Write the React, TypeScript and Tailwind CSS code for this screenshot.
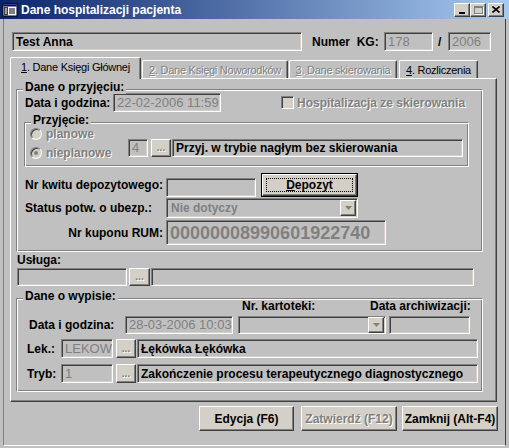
import React from 'react';

const dis = 'text-[#808080] [text-shadow:1px_1px_0_#ffffff]';
const sunken =
  'border border-t-[#808080] border-l-[#808080] border-b-white border-r-white shadow-[inset_1px_1px_0_#404040,inset_-1px_-1px_0_#d4d0c8]';
const raised =
  'bg-[#d4d0c8] border border-t-white border-l-white border-b-[#404040] border-r-[#404040] shadow-[inset_-1px_-1px_0_#808080]';
const etched =
  'border border-t-[#808080] border-l-[#808080] border-b-white border-r-white shadow-[inset_1px_1px_0_#ffffff,inset_-1px_-1px_0_#808080]';

function Field({ className = '', children }: { className?: string; children?: React.ReactNode }) {
  return (
    <div className={`${sunken} bg-[#c0c0c0] flex items-center overflow-hidden whitespace-nowrap pl-[3px] ${className}`}>
      {children}
    </div>
  );
}

function Dots({ className = '' }: { className?: string }) {
  return (
    <div className={`${raised} flex items-end justify-center pb-[3px] ${className}`}>
      <span className="text-[10px] leading-none font-bold text-[#808080] [text-shadow:1px_1px_0_#ffffff]">...</span>
    </div>
  );
}

function Combo({ className = '', children }: { className?: string; children?: React.ReactNode }) {
  return (
    <div className={`${sunken} bg-[#c0c0c0] flex items-center justify-between p-[1px] pl-[4px] ${className}`}>
      <span className="text-[12px] font-bold text-[#808080] whitespace-nowrap">{children}</span>
      <div className={`${raised} w-[16px] h-[16px] shrink-0 flex items-center justify-center`}>
        <svg width="7" height="4" viewBox="0 0 7 4">
          <path d="M0 0h7L3.5 4z" fill="#808080" />
        </svg>
      </div>
    </div>
  );
}

function Group({ label, className = '', children }: { label: string; className?: string; children?: React.ReactNode }) {
  return (
    <div className={`relative ${etched} ${className}`}>
      <span className="absolute left-[6px] -top-[10px] bg-[#c0c0c0] px-[2px] text-[12px] font-bold leading-[14px]">{label}</span>
      {children}
    </div>
  );
}

function Radio({ checked, label }: { checked?: boolean; label: string }) {
  return (
    <div className="flex items-center h-[19px]">
      <div className="w-[12px] h-[12px] rounded-full bg-[#d4d0c8] border border-t-[#808080] border-l-[#808080] border-b-white border-r-white shadow-[inset_1px_1px_0_#404040] flex items-center justify-center">
        {checked && <div className="w-[4px] h-[4px] rounded-full bg-[#808080]" />}
      </div>
      <span className={`ml-[4px] text-[12px] font-bold ${dis}`}>{label}</span>
    </div>
  );
}

function TitleButton({ children, className = '' }: { children: React.ReactNode; className?: string }) {
  return <div className={`${raised} w-[16px] h-[14px] flex items-center justify-center ${className}`}>{children}</div>;
}

function Tab({ selected, disabled, num, text, className = '' }: { selected?: boolean; disabled?: boolean; num: string; text: string; className?: string }) {
  const base = selected
    ? 'h-[22px] -mb-[1px] z-10 bg-[#c0c0c0] pt-[1px]'
    : 'h-[18px]';
  return (
    <div
      className={`relative ${base} border-t border-l border-t-white border-l-white border-r border-r-[#404040] shadow-[inset_-1px_0_0_#808080] rounded-t-[2px] flex items-start justify-center pt-[2px] text-[11px] tracking-[-0.25px] leading-[14px] whitespace-nowrap ${disabled ? dis : 'text-black'} ${className}`}
    >
      <span>
        <span className="underline">{num}</span>
        {text}
      </span>
    </div>
  );
}

export default function App() {
  return (
    <div className="w-[509px] h-[448px] bg-[#c0c0c0] flex flex-col overflow-hidden font-['Liberation_Sans',Arial,sans-serif] text-black select-none">
      {/* title bar */}
      <div className="h-[19px] shrink-0 bg-[linear-gradient(to_right,#0a246a,#a6caf0)] flex items-center pl-[2px] pr-[5px]">
        <svg width="16" height="16" viewBox="0 0 16 16" className="shrink-0">
          <rect x="1" y="2" width="14" height="12" fill="#ffffff" stroke="#000000" />
          <rect x="1.5" y="2.5" width="13" height="2" fill="#000080" />
          <rect x="2" y="5" width="4" height="8.5" fill="#404040" />
          <path d="M3 7h2M3 9h2M3 11h2" stroke="#ffffff" />
          <path d="M7 7h6M7 9h6M7 11h6" stroke="#000000" />
        </svg>
        <span className="ml-[3px] text-white font-bold text-[12px] leading-none">Dane hospitalizacji pacjenta</span>
        <div className="ml-auto flex items-center">
          <TitleButton>
            <div className="w-[6px] h-[2px] bg-black mt-[6px] -ml-[1px]" />
          </TitleButton>
          <TitleButton>
            <div className="w-[9px] h-[8px] border border-[#808080] border-t-2 shadow-[1px_1px_0_#ffffff]" />
          </TitleButton>
          <TitleButton className="ml-[2px]">
            <svg width="8" height="7" viewBox="0 0 8 7">
              <path d="M0.5 0.5l7 6M7.5 0.5l-7 6" stroke="#000000" strokeWidth="1.6" />
            </svg>
          </TitleButton>
        </div>
      </div>

      {/* body */}
      <div className="flex-1 mx-[3px] mb-[2px] border-l border-l-[#808080] border-r border-r-[#404040] border-b border-b-white flex flex-col">
        {/* patient row */}
        <div className="mt-[13px] h-[19px] flex items-center">
          <Field className="ml-[8px] w-[290px] h-[19px]">
            <span className="text-[12px] font-bold">Test Anna</span>
          </Field>
          <span className="ml-[10px] w-[72px] text-[12px] font-bold whitespace-pre">Numer  KG:</span>
          <Field className="w-[49px] h-[19px]">
            <span className="text-[13px] text-[#808080]">178</span>
          </Field>
          <span className="ml-[5px] w-[10px] text-[12px] font-bold">/</span>
          <Field className="w-[43px] h-[19px]">
            <span className="text-[13px] text-[#808080]">2006</span>
          </Field>
        </div>

        {/* tabs */}
        <div className="mt-[5px] ml-[6px] h-[22px] flex items-end">
          <Tab selected num="1" text=". Dane Księgi Głównej" className="w-[131px]" />
          <Tab disabled num="2" text=". Dane Księgi Noworodków" className="ml-[1px] w-[146px]" />
          <Tab disabled num="3" text=". Dane skierowania" className="ml-[1px] w-[108px]" />
          <Tab num="4" text=". Rozliczenia" className="ml-[2px] w-[79px]" />
        </div>

        {/* tab panel */}
        <div className="ml-[6px] w-[487px] h-[324px] border border-t-white border-l-white border-b-[#404040] border-r-[#404040] shadow-[inset_-1px_-1px_0_#808080] flex flex-col">
          <Group label="Dane o przyjęciu:" className="mt-[10px] ml-[5px] w-[467px] h-[163px] flex flex-col">
            <div className="mt-[3px] h-[19px] flex items-center">
              <span className="ml-[8px] w-[88px] text-[12px] font-bold">Data i godzina:</span>
              <Field className="w-[108px] h-[19px]">
                <span className="text-[13px] text-[#808080]">22-02-2006 11:59</span>
              </Field>
              <div className="ml-[60px] w-[13px] h-[13px] bg-[#d4d0c8] border border-t-[#808080] border-l-[#808080] border-b-white border-r-white shadow-[inset_1px_1px_0_#404040]" />
              <span className={`ml-[3px] text-[12px] font-bold ${dis}`}>Hospitalizacja ze skierowania</span>
            </div>

            <Group label="Przyjęcie:" className="mt-[10px] ml-[7px] w-[445px] h-[45px] flex">
              <div className="ml-[5px] mt-[1px] w-[98px] flex flex-col">
                <Radio label="planowe" />
                <Radio checked label="nieplanowe" />
              </div>
              <div className="mt-[16px] h-[18px] flex">
                <Field className="w-[20px] h-[18px]">
                  <span className="text-[13px] text-[#808080]">4</span>
                </Field>
                <Dots className="ml-[3px] w-[20px] h-[18px]" />
                <Field className="ml-[1px] w-[291px] h-[18px]">
                  <span className="text-[12px] font-bold">Przyj. w trybie nagłym bez skierowania</span>
                </Field>
              </div>
            </Group>

            <div className="mt-[6px] h-[24px] flex items-end">
              <span className="ml-[8px] w-[141px] text-[12px] font-bold self-center">Nr kwitu depozytowego:</span>
              <Field className="w-[90px] h-[19px]" />
              <div className="ml-[5px] w-[97px] h-[24px] border border-black">
                <div className={`${raised} w-full h-full flex items-center justify-center p-[3px]`}>
                  <div className="w-full h-full border border-dotted border-black flex items-center justify-center">
                    <span className="text-[12px] font-bold">
                      <span className="underline">D</span>epozyt
                    </span>
                  </div>
                </div>
              </div>
            </div>

            <div className="mt-[1px] h-[20px] flex items-center">
              <span className="ml-[8px] w-[141px] text-[12px] font-bold">Status potw. o ubezp.:</span>
              <Combo className="w-[192px] h-[20px]">Nie dotyczy</Combo>
            </div>

            <div className="mt-[2px] h-[25px] flex items-center">
              <span className="ml-[8px] w-[141px] pr-[3px] text-right text-[12px] font-bold">Nr kuponu RUM:</span>
              <Field className="w-[220px] h-[25px] pl-[2px]">
                <span className="text-[18px] font-bold text-[#808080] leading-none">00000008990601922740</span>
              </Field>
            </div>
          </Group>

          <div className="mt-[1px] ml-[6px] h-[14px] text-[12px] font-bold leading-[14px]">Usługa:</div>
          <div className="mt-[1px] h-[18px] flex">
            <Field className="ml-[6px] w-[110px] h-[18px]" />
            <Dots className="ml-[2px] w-[21px] h-[18px]" />
            <Field className="ml-[1px] w-[323px] h-[18px]" />
          </div>

          <Group label="Dane o wypisie:" className="mt-[12px] ml-[5px] w-[467px] h-[94px] flex flex-col">
            <div className="h-[13px] flex items-center text-[12px] font-bold leading-none">
              <span className="ml-[225px] w-[128px]">Nr. kartoteki:</span>
              <span>Data archiwizacji:</span>
            </div>
            <div className="mt-[4px] h-[18px] flex items-center">
              <span className="ml-[12px] w-[96px] text-[12px] font-bold">Data i godzina:</span>
              <Field className="w-[108px] h-[18px]">
                <span className="text-[13px] text-[#808080]">28-03-2006 10:03</span>
              </Field>
              <Combo className="ml-[5px] w-[148px] h-[18px]" />
              <Field className="ml-[3px] w-[81px] h-[18px]" />
            </div>
            <div className="mt-[5px] h-[19px] flex items-center">
              <span className="ml-[10px] w-[34px] text-[12px] font-bold">Lek.:</span>
              <Field className="w-[52px] h-[19px]">
                <span className="text-[13px] text-[#808080]">LEKOWI</span>
              </Field>
              <Dots className="ml-[3px] w-[20px] h-[19px]" />
              <Field className="ml-[1px] w-[341px] h-[19px]">
                <span className="text-[12px] font-bold">Łękówka Łękówka</span>
              </Field>
            </div>
            <div className="mt-[6px] h-[19px] flex items-center">
              <span className="ml-[10px] w-[34px] text-[12px] font-bold">Tryb:</span>
              <Field className="w-[52px] h-[19px]">
                <span className="text-[13px] text-[#808080]">1</span>
              </Field>
              <Dots className="ml-[3px] w-[20px] h-[19px]" />
              <Field className="ml-[1px] w-[341px] h-[19px]">
                <span className="text-[12px] font-bold">Zakończenie procesu terapeutycznego diagnostycznego</span>
              </Field>
            </div>
          </Group>
        </div>

        {/* bottom buttons */}
        <div className="mt-[4px] h-[25px] flex">
          <div className={`${raised} ml-[195px] w-[95px] h-[25px] flex items-center justify-center text-[12px] font-bold`}>Edycja (F6)</div>
          <div className={`${raised} ml-[7px] w-[96px] h-[25px] flex items-center justify-center text-[12px] font-bold`}>
            <span className={dis}>Zatwierdź (F12)</span>
          </div>
          <div className={`${raised} ml-[5px] w-[96px] h-[25px] flex items-center justify-center text-[12px] font-bold`}>Zamknij (Alt-F4)</div>
        </div>
      </div>
    </div>
  );
}
